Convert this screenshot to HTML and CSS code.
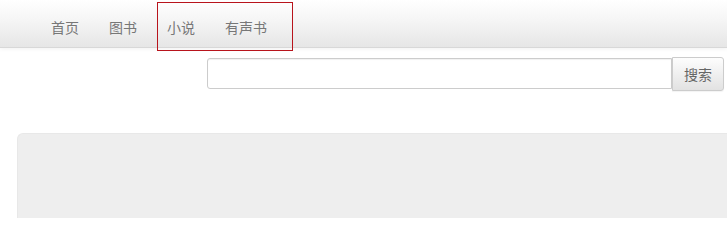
FILE: index.html
```html
<!DOCTYPE html>
<html lang="zh">
<head>
<meta charset="utf-8">
<title>书城</title>
<link rel="stylesheet" href="styles.css">
</head>
<body>
<nav class="navbar">
  <ul class="nav">
    <li><a href="#">首页</a></li>
    <li><a href="#">图书</a></li>
    <li><a href="#">小说</a></li>
    <li><a href="#">有声书</a></li>
  </ul>
  <div class="highlight"></div>
</nav>
<form class="search">
  <input class="search-input" type="text">
  <button class="search-btn" type="button">搜索</button>
</form>
<div class="jumbotron"></div>
</body>
</html>
```
FILE: styles.css
```css
html, body {
  margin: 0;
  padding: 0;
  background: #fff;
  font-family: "Noto Sans CJK SC", "Noto Sans", sans-serif;
  font-size: 14px;
  overflow: hidden;
}
.navbar {
  position: relative;
  height: 47px;
  border-bottom: 1px solid #d8d8d8;
  background: linear-gradient(to bottom, #ffffff 0%, #f6f6f6 40%, #e6e6e6 100%);
  box-shadow: 0 1px 4px rgba(0,0,0,0.06);
}
.nav {
  display: flex;
  margin: 0;
  padding: 0 0 0 36px;
  list-style: none;
}
.nav a {
  display: block;
  padding: 17px 15px 10px;
  line-height: 20px;
  color: #777;
  text-decoration: none;
}
.highlight {
  position: absolute;
  left: 157px;
  top: 2px;
  width: 134px;
  height: 47px;
  border: 1px solid #b8141c;
}
.search {
  display: flex;
  align-items: flex-start;
  margin: 0;
  padding: 9px 0 0 207px;
}
.search-input {
  box-sizing: border-box;
  width: 465px;
  height: 31px;
  margin: 1px 0 0;
  border: 1px solid #ccc;
  border-radius: 3px 0 0 3px;
  box-shadow: inset 0 1px 1px rgba(0,0,0,0.06);
  outline: none;
}
.search-btn {
  box-sizing: border-box;
  width: 52px;
  height: 34px;
  margin: 0;
  border: 1px solid #ccc;
  border-radius: 0 3px 3px 0;
  background: linear-gradient(to bottom, #fdfdfd 0%, #e2e2e2 100%);
  color: #666;
  font-family: inherit;
  font-size: 14px;
  padding: 0;
  box-shadow: 0 1px 1px rgba(0,0,0,0.05);
}
.jumbotron {
  margin: 42px 0 0 17px;
  height: 84px;
  background: #eee;
  border-radius: 6px 0 0 0;
  border-top: 1px solid #e8e8e8;
  border-left: 1px solid #e8e8e8;
}
```
